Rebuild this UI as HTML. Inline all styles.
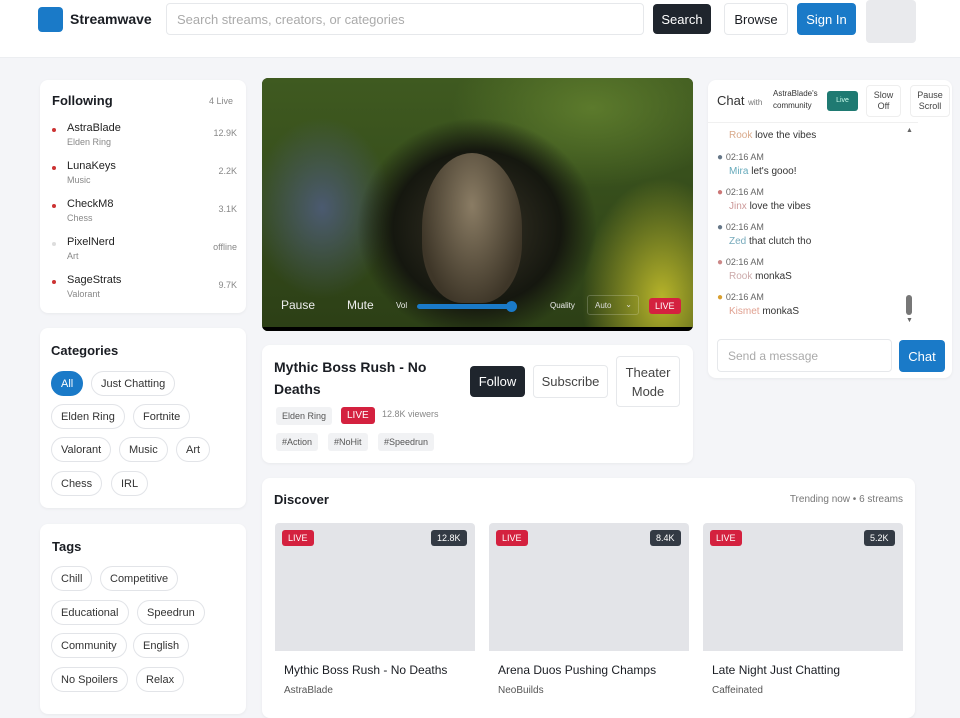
<!DOCTYPE html><html><head><style>
*{box-sizing:border-box;margin:0;padding:0}
body{width:960px;height:703px;overflow:hidden;background:#f4f5f8;font-family:"Liberation Sans",sans-serif;color:#1a1d23;position:relative}
.a{position:absolute}
.card{position:absolute;background:#fff;border-radius:8px;box-shadow:0 1px 3px rgba(0,0,0,.05)}
.btn{position:absolute;border-radius:4px;font-size:13px;display:flex;align-items:center;justify-content:center;text-align:center}
.chip{position:absolute;border:1px solid #e2e4e8;border-radius:14px;font-size:11px;height:25px;display:flex;align-items:center;padding:0 9px;color:#333;background:#fff}
.h{font-weight:bold;font-size:13px}
.fn{font-size:11px;color:#222}.fs{font-size:9px;color:#888}
.tag{position:absolute;background:#f1f2f4;border-radius:3px;font-size:9px;color:#555;padding:4px 6px}
.live{position:absolute;background:#d4213f;color:#fff;font-size:9px;padding:3px 6px;border-radius:3px}
.cnt{position:absolute;background:#333a44;color:#fff;font-size:9px;padding:3px 6px;border-radius:3px}
.msg{position:absolute;left:717px;font-size:10px;color:#333}
.t{color:#666;font-size:9px}
</style></head><body>
<div class="a" style="left:0;top:0;width:960px;height:58px;background:#fff;border-bottom:1px solid #eceef1"></div>
<div class="a" style="left:38px;top:7px;width:25px;height:25px;background:#1a7ac8;border-radius:4px"></div>
<div class="a h" style="left:70px;top:11px;font-size:14px">Streamwave</div>
<div class="a" style="left:166px;top:3px;width:478px;height:32px;border:1px solid #e6e8eb;border-radius:4px;font-size:13px;color:#aaa;padding:8px 10px">Search streams, creators, or categories</div>
<div class="btn" style="left:653px;top:4px;width:58px;height:30px;background:#1f252d;color:#fff">Search</div>
<div class="btn" style="left:724px;top:3px;width:64px;height:32px;border:1px solid #e6e8eb;background:#fff">Browse</div>
<div class="btn" style="left:797px;top:3px;width:59px;height:32px;background:#1a7ac8;color:#fff">Sign In</div>
<div class="a" style="left:866px;top:0;width:50px;height:43px;background:#e9eaed;border-radius:4px"></div>

<div class="card" style="left:40px;top:80px;width:206px;height:233px"></div>
<div class="a h" style="left:52px;top:93px">Following</div><div class="a fs" style="left:209px;top:96px">4 Live</div>
<div class="a" style="left:52px;top:120px;width:185px">
<div style="position:relative;height:38px"><span class="a" style="left:0;top:8px;width:4px;height:4px;border-radius:50%;background:#c33"></span><div class="a fn" style="left:15px;top:2px">AstraBlade</div><div class="a fs" style="left:15px;top:17px">Elden Ring</div><div class="a fs" style="right:0;top:8px">12.9K</div></div>
<div style="position:relative;height:38px"><span class="a" style="left:0;top:8px;width:4px;height:4px;border-radius:50%;background:#c33"></span><div class="a fn" style="left:15px;top:2px">LunaKeys</div><div class="a fs" style="left:15px;top:17px">Music</div><div class="a fs" style="right:0;top:8px">2.2K</div></div>
<div style="position:relative;height:38px"><span class="a" style="left:0;top:8px;width:4px;height:4px;border-radius:50%;background:#c33"></span><div class="a fn" style="left:15px;top:2px">CheckM8</div><div class="a fs" style="left:15px;top:17px">Chess</div><div class="a fs" style="right:0;top:8px">3.1K</div></div>
<div style="position:relative;height:38px"><span class="a" style="left:0;top:8px;width:4px;height:4px;border-radius:50%;background:#ddd"></span><div class="a fn" style="left:15px;top:2px">PixelNerd</div><div class="a fs" style="left:15px;top:17px">Art</div><div class="a fs" style="right:0;top:8px">offline</div></div>
<div style="position:relative;height:38px"><span class="a" style="left:0;top:8px;width:4px;height:4px;border-radius:50%;background:#c33"></span><div class="a fn" style="left:15px;top:2px">SageStrats</div><div class="a fs" style="left:15px;top:17px">Valorant</div><div class="a fs" style="right:0;top:8px">9.7K</div></div>
</div>

<div class="card" style="left:40px;top:328px;width:206px;height:180px"></div>
<div class="a h" style="left:51px;top:343px">Categories</div>
<div class="chip" style="left:51px;top:371px;background:#1a7ac8;color:#fff;border-color:#1a7ac8">All</div>
<div class="chip" style="left:91px;top:371px">Just Chatting</div>
<div class="chip" style="left:51px;top:404px">Elden Ring</div>
<div class="chip" style="left:133px;top:404px">Fortnite</div>
<div class="chip" style="left:51px;top:437px">Valorant</div>
<div class="chip" style="left:119px;top:437px">Music</div>
<div class="chip" style="left:176px;top:437px">Art</div>
<div class="chip" style="left:51px;top:471px">Chess</div>
<div class="chip" style="left:111px;top:471px">IRL</div>

<div class="card" style="left:40px;top:524px;width:206px;height:190px"></div>
<div class="a h" style="left:52px;top:539px">Tags</div>
<div class="chip" style="left:51px;top:566px">Chill</div>
<div class="chip" style="left:100px;top:566px">Competitive</div>
<div class="chip" style="left:51px;top:600px">Educational</div>
<div class="chip" style="left:137px;top:600px">Speedrun</div>
<div class="chip" style="left:51px;top:633px">Community</div>
<div class="chip" style="left:133px;top:633px">English</div>
<div class="chip" style="left:51px;top:667px">No Spoilers</div>
<div class="chip" style="left:136px;top:667px">Relax</div>

<div class="a" style="left:262px;top:78px;width:431px;height:253px;border-radius:6px;overflow:hidden;background:#1d2a12">
<div class="a" style="left:0;top:0;width:431px;height:253px;background:radial-gradient(ellipse 120px 110px at 215px 150px,#3a3528 0,#15170f 70%,transparent 100%),radial-gradient(ellipse 140px 80px at 330px 30px,#5c7a2c,transparent),radial-gradient(ellipse 80px 120px at 400px 220px,#b7b42a,transparent),radial-gradient(ellipse 70px 90px at 60px 130px,#4b5a70,transparent),linear-gradient(#3f5a20,#2c3f16)"></div>
<div class="a" style="left:160px;top:75px;width:100px;height:150px;border-radius:50% 50% 40% 40%;background:radial-gradient(ellipse at 50% 35%,#8a7c64,#3e3628 75%)"></div>
<div class="a" style="left:19px;top:220px;color:#eee;font-size:12px">Pause</div>
<div class="a" style="left:85px;top:220px;color:#eee;font-size:12px">Mute</div>
<div class="a" style="left:134px;top:223px;color:#eee;font-size:8px">Vol</div>
<div class="a" style="left:155px;top:226px;width:95px;height:5px;background:#1a7ac8;border-radius:3px"></div>
<div class="a" style="left:244px;top:223px;width:11px;height:11px;background:#1a7ac8;border-radius:50%"></div>
<div class="a" style="left:288px;top:223px;color:#eee;font-size:8px">Quality</div>
<div class="a" style="left:325px;top:217px;width:52px;height:20px;border:1px solid rgba(255,255,255,.2);border-radius:3px;color:#ddd;font-size:8px;padding:5px 7px;white-space:nowrap">Auto<span style="position:absolute;right:6px;top:4px">⌄</span></div>
<div class="live" style="left:387px;top:220px">LIVE</div>
<div class="a" style="left:0;bottom:0;width:431px;height:4px;background:#000"></div>
</div>

<div class="card" style="left:262px;top:345px;width:431px;height:118px"></div>
<div class="a" style="left:274px;top:356px;font-weight:bold;font-size:14px;line-height:22px;width:180px">Mythic Boss Rush - No Deaths</div>
<div class="btn" style="left:470px;top:366px;width:55px;height:31px;background:#1f252d;color:#fff">Follow</div>
<div class="btn" style="left:533px;top:365px;width:75px;height:33px;border:1px solid #e6e8eb;color:#444">Subscribe</div>
<div class="btn" style="left:616px;top:356px;width:64px;height:51px;border:1px solid #e6e8eb;color:#444;line-height:19px">Theater<br>Mode</div>
<div class="tag" style="left:276px;top:407px">Elden Ring</div>
<div class="live" style="left:341px;top:407px;font-size:10px">LIVE</div>
<div class="a" style="left:382px;top:409px;font-size:9px;color:#888">12.8K viewers</div>
<div class="tag" style="left:276px;top:433px">#Action</div>
<div class="tag" style="left:328px;top:433px">#NoHit</div>
<div class="tag" style="left:378px;top:433px">#Speedrun</div>

<div class="card" style="left:708px;top:80px;width:244px;height:298px"></div>
<div class="a" style="left:717px;top:93px;font-size:13px;color:#333">Chat <span style="font-size:8px;color:#777">with</span></div>
<div class="a" style="left:773px;top:88px;font-size:8px;color:#333;line-height:12px">AstraBlade's<br>community</div>
<div class="a" style="left:827px;top:91px;width:31px;height:20px;background:#1f7a72;border-radius:3px;color:#cfe;font-size:7px;text-align:center;padding-top:6px">Live</div>
<div class="btn" style="left:866px;top:85px;width:35px;height:32px;border:1px solid #eee;font-size:9px;line-height:11px;color:#444">Slow<br>Off</div>
<div class="btn" style="left:910px;top:85px;width:40px;height:32px;border:1px solid #eee;font-size:9px;line-height:11px;color:#444">Pause<br>Scroll</div>
<div class="a" style="left:708px;top:122px;width:210px;height:1px;background:#f0f0f0"></div>
<div class="msg" style="top:130px;left:729px"><span style="color:#d9a98a">Rook</span> love the vibes</div>
<div class="msg" style="top:152px"><span style="color:#678">●</span> <span class="t">02:16 AM</span></div><div class="msg" style="top:166px;left:729px"><span style="color:#6ab">Mira</span> let's gooo!</div>
<div class="msg" style="top:187px"><span style="color:#c77">●</span> <span class="t">02:16 AM</span></div><div class="msg" style="top:201px;left:729px"><span style="color:#c99">Jinx</span> love the vibes</div>
<div class="msg" style="top:222px"><span style="color:#678">●</span> <span class="t">02:16 AM</span></div><div class="msg" style="top:236px;left:729px"><span style="color:#7ab">Zed</span> that clutch tho</div>
<div class="msg" style="top:257px"><span style="color:#c88">●</span> <span class="t">02:16 AM</span></div><div class="msg" style="top:271px;left:729px"><span style="color:#caa">Rook</span> monkaS</div>
<div class="msg" style="top:292px"><span style="color:#d9a030">●</span> <span class="t">02:16 AM</span></div><div class="msg" style="top:306px;left:729px"><span style="color:#e0a090">Kismet</span> monkaS</div>
<div class="a" style="left:906px;top:127px;font-size:7px;color:#666">▲</div>
<div class="a" style="left:906px;top:295px;width:6px;height:20px;background:#777;border-radius:3px"></div>
<div class="a" style="left:906px;top:317px;font-size:7px;color:#666">▼</div>
<div class="a" style="left:717px;top:339px;width:175px;height:33px;border:1px solid #e6e8eb;border-radius:4px;font-size:12px;color:#aaa;padding:9px 10px">Send a message</div>
<div class="btn" style="left:899px;top:340px;width:46px;height:32px;background:#1a7ac8;color:#fff">Chat</div>

<div class="card" style="left:262px;top:478px;width:653px;height:240px"></div>
<div class="a h" style="left:274px;top:492px">Discover</div>
<div class="a" style="right:57px;top:494px;font-size:10px;color:#777">Trending now • 6 streams</div>
<div class="a" style="left:275px;top:523px;width:200px;height:128px;background:#e3e4e8;border-radius:4px 4px 0 0"></div>
<div class="a" style="left:489px;top:523px;width:200px;height:128px;background:#e3e4e8;border-radius:4px 4px 0 0"></div>
<div class="a" style="left:703px;top:523px;width:200px;height:128px;background:#e3e4e8;border-radius:4px 4px 0 0"></div>
<div class="live" style="left:282px;top:530px">LIVE</div><div class="cnt" style="left:431px;top:530px">12.8K</div>
<div class="live" style="left:496px;top:530px">LIVE</div><div class="cnt" style="left:650px;top:530px">8.4K</div>
<div class="live" style="left:710px;top:530px">LIVE</div><div class="cnt" style="left:864px;top:530px">5.2K</div>
<div class="a" style="left:284px;top:663px;font-size:12px">Mythic Boss Rush - No Deaths</div><div class="a" style="left:284px;top:685px;font-size:10px;color:#555">AstraBlade</div>
<div class="a" style="left:498px;top:663px;font-size:12px">Arena Duos Pushing Champs</div><div class="a" style="left:498px;top:685px;font-size:10px;color:#555">NeoBuilds</div>
<div class="a" style="left:712px;top:663px;font-size:12px">Late Night Just Chatting</div><div class="a" style="left:712px;top:685px;font-size:10px;color:#555">Caffeinated</div>
</body></html>
